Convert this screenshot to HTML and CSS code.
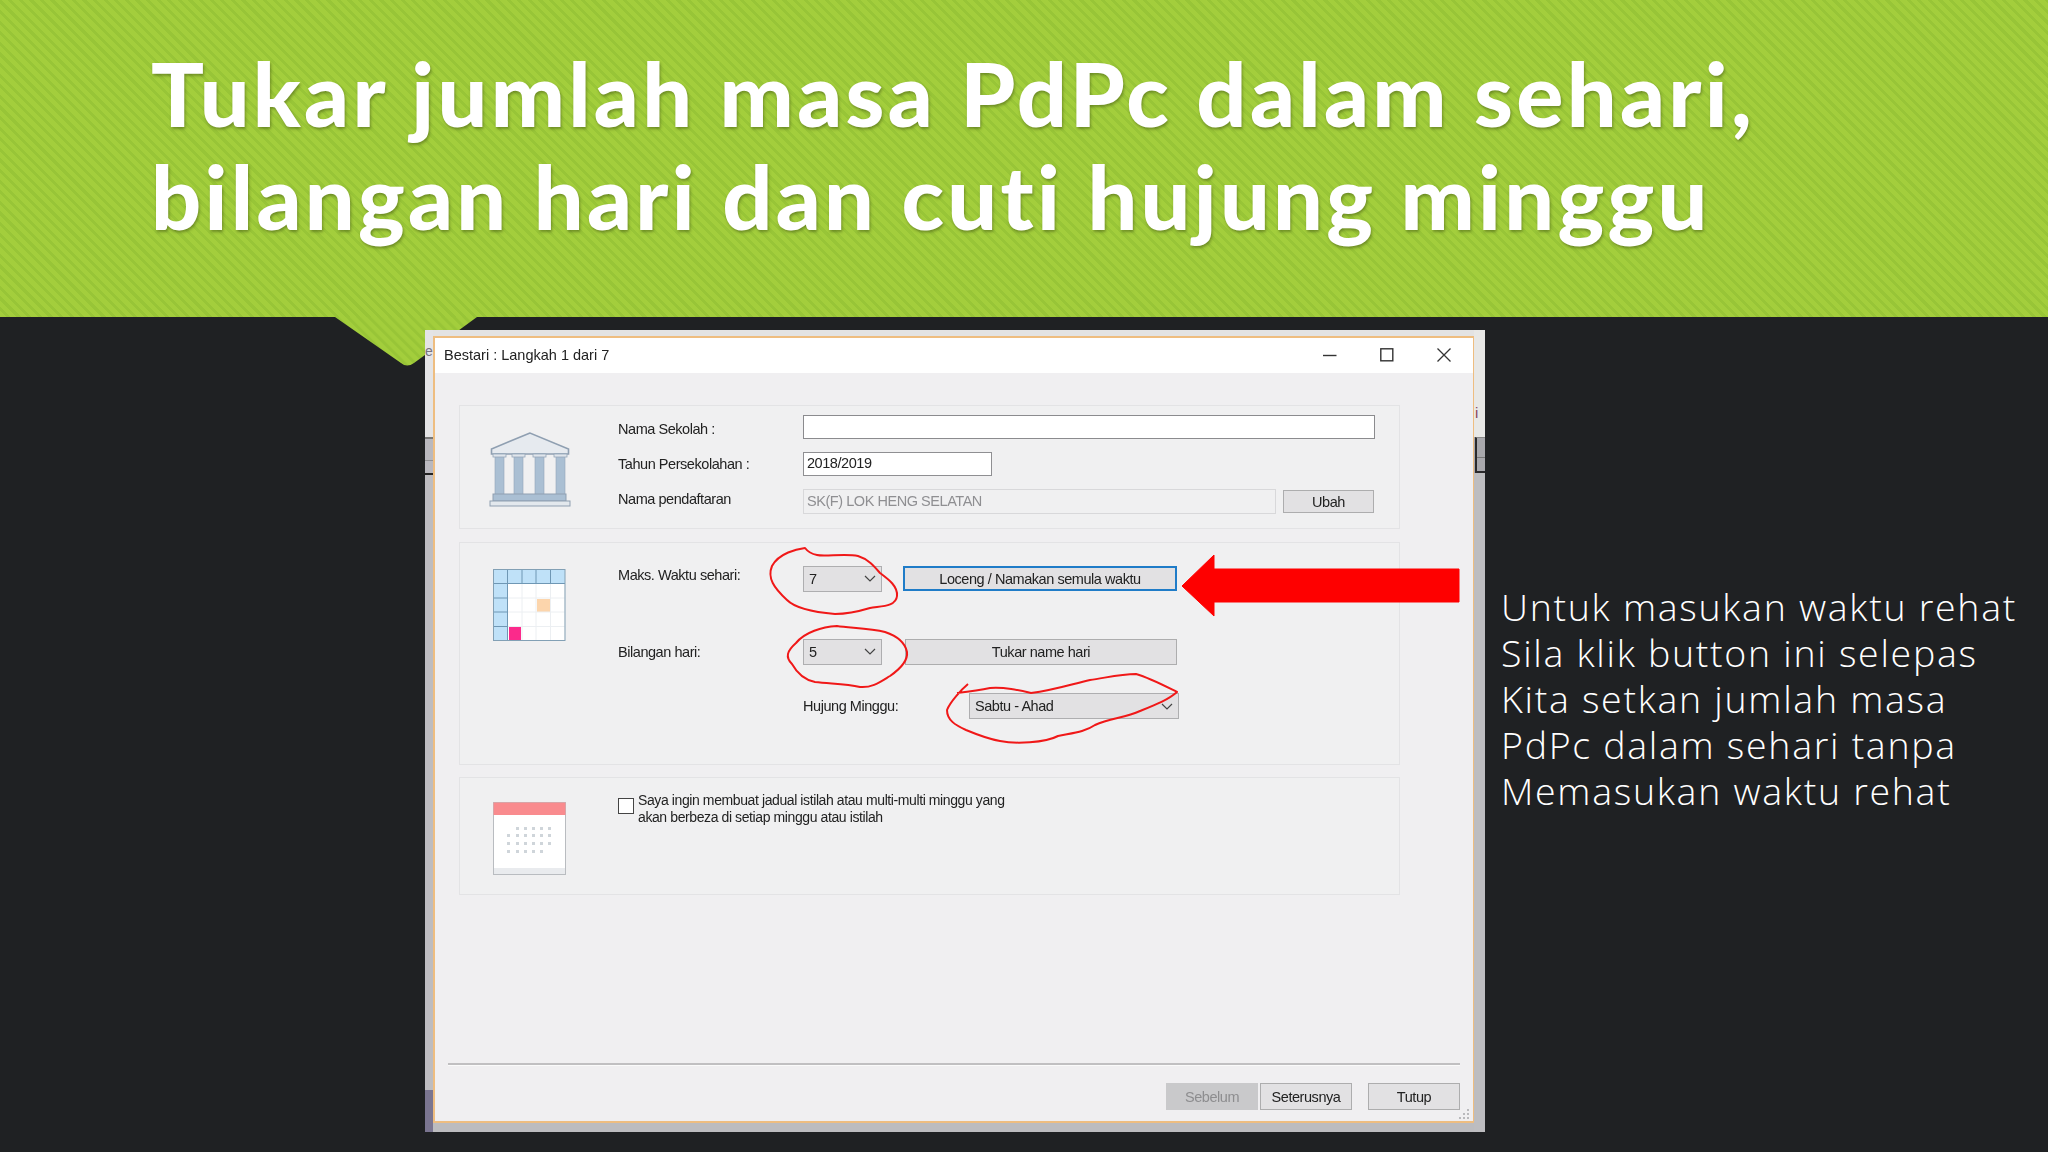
FILE: index.html
```html
<!DOCTYPE html>
<html lang="ms">
<head>
<meta charset="utf-8">
<title>Tukar jumlah masa PdPc</title>
<link rel="stylesheet" href="styles.css">
</head>
<body>
<div class="slide">
  <header class="banner">
    <h1 class="headline">Tukar jumlah masa PdPc dalam sehari,<br>bilangan hari dan cuti hujung minggu</h1>
    <svg class="notch" viewBox="0 0 142 52" width="142" height="52"><defs><pattern id="st" width="7.500" height="7.500" patternUnits="userSpaceOnUse" patternTransform="rotate(-45)"><rect width="7.500" height="7.500" fill="#a3ce3c"/><rect width="3" height="7.500" fill="#98c537"/></pattern></defs><path d="M0 0 L66 46 Q72 51 79 46 L142 0 Z" fill="url(#st)"/></svg>
  </header>
  <main class="stage">
    <div class="frame">
      <span class="strip strip-left"><span class="peek">e</span></span>
      <span class="strip strip-right"><span class="peek-i">i</span><span class="strip-box"></span></span>
      <section class="dialog">
        <div class="titlebar">
          <span class="titlebar-text">Bestari : Langkah 1 dari 7</span>
          <div class="winbtns">
            <svg width="14" height="14" viewBox="0 0 14 14"><path d="M0 7.5H13.5" stroke="#333" stroke-width="1.4"/></svg>
            <svg width="14" height="14" viewBox="0 0 14 14"><rect x=".8" y=".8" width="12" height="12" fill="none" stroke="#333" stroke-width="1.4"/></svg>
            <svg width="14" height="14" viewBox="0 0 14 14"><path d="M.5.5L13.5 13.5M13.5.5L.5 13.5" stroke="#333" stroke-width="1.3"/></svg>
          </div>
        </div>
        <div class="content">
          <div class="group group-school">
            <svg class="icon icon-bank" width="84" height="80" viewBox="0 0 84 80">
              <path d="M42 4 L3.500 20 V25 H80.500 V20 Z" fill="#e6eaef" stroke="#8f9fb1" stroke-width="1.600"/>
              <g fill="#aabfd3" stroke="#93a5b8" stroke-width=".6"><rect x="7" y="25" width="9" height="41"/><rect x="26" y="25" width="9" height="41"/><rect x="47" y="25" width="9" height="41"/><rect x="68" y="25" width="9" height="41"/></g>
              <g fill="#dfe5eb" stroke="#93a5b8" stroke-width=".8"><rect x="5" y="25" width="13" height="3"/><rect x="24" y="25" width="13" height="3"/><rect x="45" y="25" width="13" height="3"/><rect x="66" y="25" width="13" height="3"/></g>
              <rect x="5" y="65" width="73" height="7" fill="#aabfd3" stroke="#8f9fb1"/>
              <rect x="2" y="72" width="80" height="5" fill="#e3e8ed" stroke="#8f9fb1"/>
            </svg>
            <div class="rows rows-school">
              <div class="row"><label class="label label-sekolah">Nama Sekolah :</label><span class="input input-wide"></span></div>
              <div class="row"><label class="label">Tahun Persekolahan :</label><span class="input input-year">2018/2019</span></div>
              <div class="row"><label class="label label-daftar">Nama pendaftaran</label><span class="input input-off">SK(F) LOK HENG SELATAN</span><span class="btn btn-ubah">Ubah</span></div>
            </div>
          </div>
          <div class="group group-time">
            <svg class="icon icon-grid" width="73" height="72" viewBox="0 0 73 72">
              <rect x=".5" y=".5" width="71" height="71" fill="#fff"/>
              <path d="M.5 .5H72V14.500H14.500V72H.5Z" fill="#bfe1f8"/>
              <rect x="44" y="30" width="13" height="13" fill="#fcd5ac"/>
              <rect x="16" y="58" width="12" height="14" fill="#fb2a8b"/>
              <path d="M14.500 14.500V72M29 14.500V72M43 14.500V72M57.500 14.500V72M14.500 29H72M14.500 43H72M14.500 57.500H72" stroke="#eceff2" fill="none"/>
              <path d="M14.500 .5V14.500M29 .5V14.500M43 .5V14.500M57.500 .5V14.500M.5 14.500H72M.5 29H14.500M.5 43H14.500M.5 57.500H14.500M14.500 14.500V72" stroke="#6f97b4" fill="none"/>
              <rect x=".5" y=".5" width="71.500" height="71" fill="none" stroke="#82a0b5"/>
            </svg>
            <div class="rows rows-time">
              <div class="row row-maks"><label class="label label-maks">Maks. Waktu sehari:</label><span class="combo combo-small">7<svg class="chev" width="12" height="7" viewBox="0 0 12 7"><path d="M1 1L6 6L11 1" fill="none" stroke="#444" stroke-width="1.200"/></svg></span><span class="btn btn-focus">Loceng / Namakan semula waktu</span></div>
              <div class="row row-hari"><label class="label">Bilangan hari:</label><span class="combo combo-small">5<svg class="chev" width="12" height="7" viewBox="0 0 12 7"><path d="M1 1L6 6L11 1" fill="none" stroke="#444" stroke-width="1.200"/></svg></span><span class="btn btn-name">Tukar name hari</span></div>
              <div class="row row-hujung"><label class="label label-hujung">Hujung Minggu:</label><span class="combo combo-wide">Sabtu - Ahad<svg class="chev" width="12" height="7" viewBox="0 0 12 7"><path d="M1 1L6 6L11 1" fill="none" stroke="#444" stroke-width="1.200"/></svg></span></div>
            </div>
          </div>
          <div class="group group-term">
            <svg class="icon icon-cal" width="74" height="74" viewBox="0 0 74 74">
              <rect x=".5" y=".5" width="72" height="72" fill="#fff" stroke="#b9bcc0"/>
              <rect x=".5" y=".5" width="72" height="12.500" fill="#f98b8e"/>
              <rect x="1" y="66" width="71" height="6" fill="#e9ebee"/>
              <g fill="#cfd5da"><rect x="23" y="25" width="3" height="3"/><rect x="31" y="25" width="3" height="3"/><rect x="39" y="25" width="3" height="3"/><rect x="47" y="25" width="3" height="3"/><rect x="55" y="25" width="3" height="3"/><rect x="14" y="32" width="3" height="3"/><rect x="23" y="32" width="3" height="3"/><rect x="31" y="32" width="3" height="3"/><rect x="39" y="32" width="3" height="3"/><rect x="47" y="32" width="3" height="3"/><rect x="55" y="32" width="3" height="3"/><rect x="14" y="40" width="3" height="3"/><rect x="23" y="40" width="3" height="3"/><rect x="31" y="40" width="3" height="3"/><rect x="39" y="40" width="3" height="3"/><rect x="47" y="40" width="3" height="3"/><rect x="55" y="40" width="3" height="3"/><rect x="14" y="48" width="3" height="3"/><rect x="23" y="48" width="3" height="3"/><rect x="31" y="48" width="3" height="3"/><rect x="39" y="48" width="3" height="3"/><rect x="47" y="48" width="3" height="3"/></g>
            </svg>
            <div class="check-row">
              <span class="checkbox"></span>
              <p class="check-text">Saya ingin membuat jadual istilah atau multi-multi minggu yang<br>akan berbeza di setiap minggu atau istilah</p>
            </div>
          </div>
          <div class="footer">
            <span class="btn btn-foot btn-off">Sebelum</span>
            <span class="btn btn-foot">Seterusnya</span>
            <span class="btn btn-foot btn-last">Tutup</span>
          </div>
        </div>
        <svg class="grip" width="12" height="12" viewBox="0 0 12 12"><g fill="#b9b9bc"><rect x="8" y="0" width="2" height="2"/><rect x="4" y="4" width="2" height="2"/><rect x="8" y="4" width="2" height="2"/><rect x="0" y="8" width="2" height="2"/><rect x="4" y="8" width="2" height="2"/><rect x="8" y="8" width="2" height="2"/></g></svg>
      </section>
      <svg class="marks" width="1060" height="802" viewBox="425 330 1060 802">
        <path class="scribble" d="M805 548 C797 549 779 553 772 566 C767 578 774 588 787 600 C795 608 812 612 835 614 C850 614 860 611 870 608 C880 606 896 607 897 596 C898 586 888 579 880 573 C874 566 868 559 858 556 C845 553 825 557 817 555 C812 554 808 552 805 548Z"/>
        <path class="scribble" d="M837 626 C822 627 805 632 796 643 C787 651 785 657 792 664 C797 673 805 680 815 682 C830 684 845 683 860 687 C872 688 880 682 890 676 C900 669 908 660 907 652 C905 642 897 636 885 632 C870 628 850 628 837 626Z"/>
        <path class="scribble" d="M968 684 C962 689 950 702 947 710 C947 720 955 725 966 730 C978 735 988 739 1000 741 C1015 744 1045 743 1058 736 C1072 733 1085 732 1095 725 C1110 718 1125 718 1140 711 C1155 705 1168 700 1177 692 C1165 686 1150 678 1136 674 C1120 674 1105 678 1090 680 C1072 684 1055 690 1031 693 C1018 690 1005 687 990 688 C980 690 965 692 957 693"/>
        <path class="arrow" d="M1182 586 L1214 555 V569 H1459 V602 H1214 V616 Z"/>
      </svg>
    </div>
    <p class="note">Untuk masukan waktu rehat<br>Sila klik button ini selepas<br>Kita setkan jumlah masa<br>PdPc dalam sehari tanpa<br>Memasukan waktu rehat</p>
  </main>
</div>
</body>
</html>
```
FILE: styles.css
```css
* { box-sizing: border-box; }
html, body { margin: 0; padding: 0; }
body { width: 2048px; height: 1152px; overflow: hidden; background: #1f2123; }
.slide { width: 2048px; height: 1152px; position: relative; background: #1f2123; }

.banner {
  position: relative;
  height: 317px;
  padding: 42px 0 0 151px;
  background: repeating-linear-gradient(45deg, #a3ce3c 0 4.500px, #98c537 4.500px 7.500px);
}
.headline {
  margin: 0;
  font: 900 88px/103px Lato, "Open Sans", sans-serif;
  letter-spacing: 3.300px;
  color: #fff;
  white-space: nowrap;
  text-shadow: 1px 2px 3px rgba(70, 90, 20, .55);
}
.notch { position: absolute; left: 335px; top: 317px; display: block; }

.stage { display: flex; align-items: flex-start; padding: 13px 0 0 425px; position: relative; }
.frame {
  position: relative;
  width: 1060px;
  height: 802px;
  flex: none;
  padding: 6px 11px 9px 8px;
  background: linear-gradient(#e3e3e3 0 107px, #a9a8ae 107px 143px, #bcbcbf 143px);
}
.strip { position: absolute; top: 0; width: 8px; overflow: hidden; }
.strip-left { left: 0; height: 802px; background: linear-gradient(#e4e4e6 0 107px, #777 107px 109px, #b9b8be 109px 130px, #8f8f92 130px 131px, #b9b8be 131px 143px, #222 143px 145px, #bdbcc0 145px 760px, #7a7590 760px); }
.strip-right { right: 0; width: 11px; height: 802px; background: linear-gradient(#e8e8e6 0 107px, #a8a8ac 107px 143px, #bdbdc0 143px); }
.peek {
  display: block;
  margin: 13px 0 0 0;
  font: 14px/17px "Liberation Sans", sans-serif;
  color: #77727c;
  white-space: nowrap;
}
.peek-i {
  display: block;
  margin: 74px 0 0 1px;
  font: 15px/17px "Liberation Sans", sans-serif;
  color: #8a4a5e;
}
.strip-box {
  position: absolute;
  left: 1px;
  top: 107px;
  width: 10px;
  height: 36px;
  border-left: 2px solid #2a2a2c;
  border-bottom: 2px solid #2a2a2c;
  border-top: 1px solid #888;
  background: linear-gradient(#a8a8ac 0 19px, #777 19px 20px, #a8a8ac 20px);
}

.dialog {
  position: relative;
  width: 1041px;
  height: 787px;
  background: #f0eff1;
  border: 2px solid #eebd80;
  border-right-width: 1px;
  display: flex;
  flex-direction: column;
  font: 14.500px "Liberation Sans", Arial, sans-serif;
  letter-spacing: -.45px;
  color: #222;
  filter: blur(.45px);
}
.titlebar {
  height: 35px;
  flex: none;
  background: #fff;
  display: flex;
  align-items: center;
  justify-content: space-between;
  padding: 0 22px 2px 9px;
}
.titlebar-text { font-size: 14.500px; letter-spacing: 0; }
.winbtns { display: flex; gap: 43px; }
.winbtns svg { display: block; }

.content { flex: 1; padding: 32px 0 0 24px; }
.group {
  width: 941px;
  border: 1px solid #e3e3e5;
  background: #f0f0f1;
  display: flex;
  margin-bottom: 13px;
}
.group-school { height: 124px; padding: 9px 24px 0 28px; }
.group-time { height: 223px; margin-bottom: 12px; padding: 22px 24px 0 33px; }
.group-term { height: 118px; padding: 20px 24px 0 33px; }
.icon { display: block; flex: none; }
.icon-bank { margin-top: 14px; }
.icon-grid { margin-top: 4px; }
.icon-cal { margin-top: 4px; }

.rows { display: flex; flex-direction: column; flex: 1; margin-left: 52px; }
.rows-school { gap: 13px; margin-left: 46px; }
.row { display: flex; align-items: center; }
.label { width: 185px; flex: none; }
.label-sekolah { margin-top: 4px; }
.label-daftar { margin-bottom: 6px; }
.label-maks { margin-bottom: 8px; }
.input {
  display: block;
  height: 24px;
  border: 1px solid #8b8b8e;
  background: #fff;
  padding: 0 3px;
  line-height: 21px;
}
.input-wide { width: 572px; }
.input-year { width: 189px; border-color: #8f8f92; }
.input-off { width: 473px; height: 25px; line-height: 23px; background: #f0f0f1; border-color: #d8d8da; color: #8f8f92; }
.btn {
  display: flex;
  align-items: center;
  justify-content: center;
  height: 23px;
  background: #e2e1e3;
  border: 1px solid #adadae;
}
.btn-ubah { width: 91px; margin-left: 7px; }

.row-maks { height: 27px; }
.row-hari { height: 27px; margin-top: 46px; }
.row-hujung { height: 26px; margin-top: 28px; padding-left: 185px; }
.label-hujung { width: 166px; }
.combo {
  display: flex;
  align-items: center;
  justify-content: space-between;
  height: 26px;
  padding: 0 5px;
  background: #e2e1e3;
  border: 1px solid #aeaeb0;
}
.combo-small { width: 79px; }
.combo-wide { width: 210px; }
.chev { display: block; }
.btn-focus { width: 274px; height: 25px; margin-left: 21px; border: 2px solid #1f7cc8; }
.btn-name { width: 272px; height: 26px; margin-left: 23px; }

.check-row { display: flex; align-items: flex-start; margin-left: 51px; }
.checkbox { width: 16px; height: 16px; margin-top: 0; background: #fff; border: 1.500px solid #444; flex: none; }
.check-text { margin: -6px 0 0 4px; font-size: 14px; line-height: 17px; letter-spacing: -.4px; }

.footer {
  width: 1012px;
  margin: 168px 0 0 -11px;
  padding-top: 18px;
  border-top: 2px solid #c0bfc1;
  box-shadow: inset 0 1px 0 #fafafa;
  display: flex;
  justify-content: flex-end;
  gap: 2px;
}
.btn-foot { width: 92px; height: 27px; border-width: 1.500px; }
.btn-off { background: #c9c9cb; border-color: #c9c9cb; color: #8d8d8f; }
.btn-last { margin-left: 14px; }
.grip { position: absolute; right: 2px; bottom: 0; display: block; }

.marks { position: absolute; left: 0; top: 0; pointer-events: none; overflow: visible; }
.scribble { fill: none; stroke: #f01818; stroke-width: 2; stroke-linejoin: round; }
.arrow { fill: #fe0000; stroke: #fe0000; stroke-width: 1; stroke-linejoin: round; }

.note {
  margin: 254px 0 0 16px;
  font: 300 37.500px/46px "Open Sans", Lato, sans-serif;
  letter-spacing: 1.700px;
  color: #fff;
  white-space: nowrap;
}
```
